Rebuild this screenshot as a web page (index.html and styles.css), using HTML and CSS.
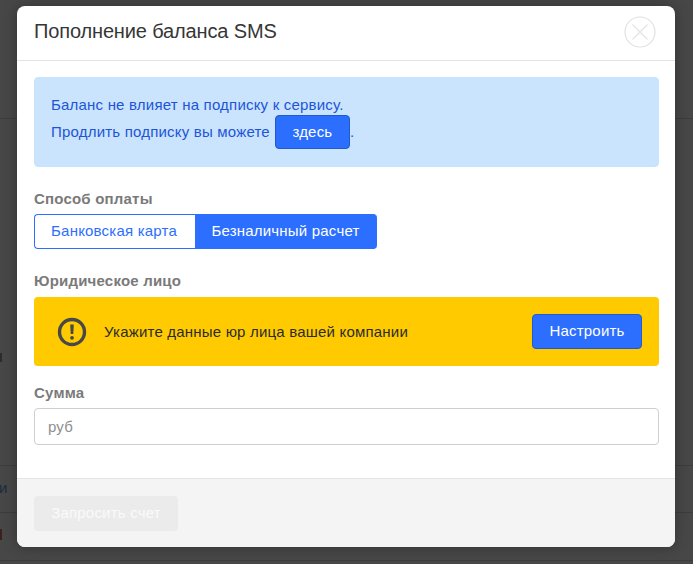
FILE: index.html
```html
<!DOCTYPE html>
<html lang="ru">
<head>
<meta charset="utf-8">
<title>Пополнение баланса SMS</title>
<link rel="stylesheet" href="styles.css">
</head>
<body>
<div class="backdrop">
  <div class="bg-row bg-row-a"></div>
  <div class="bg-row bg-row-b"><span class="bg-mark"></span></div>
  <div class="bg-row bg-row-c"><span class="bg-text">и</span></div>
  <div class="bg-row bg-row-d"><span class="bg-stub"></span></div>
</div>
<div class="modal">
  <header class="modal-head">
    <h1 class="modal-title">Пополнение баланса SMS</h1>
    <button class="close" aria-label="Закрыть">
      <svg width="32" height="32" viewBox="0 0 32 32" fill="none" stroke="#e2e2e2">
        <circle cx="16" cy="16" r="15" stroke-width="1.2"/>
        <path d="M8.5 8.5l15 15M23.500 8.500l-15 15" stroke-width="1.100"/>
      </svg>
    </button>
  </header>
  <section class="modal-body">
    <div class="notice">
      <p class="notice-line">Баланс не влияет на подписку к сервису.</p>
      <p class="notice-line">Продлить подписку вы можете<a class="btn btn-here">здесь</a>.</p>
    </div>
    <div class="field field-pay">
      <div class="label">Способ оплаты</div>
      <div class="toggle">
        <span class="toggle-item">Банковская карта</span>
        <span class="toggle-item toggle-on">Безналичный расчет</span>
      </div>
    </div>
    <div class="field field-legal">
      <div class="label">Юридическое лицо</div>
      <div class="warn">
        <svg class="warn-icon" width="30" height="30" viewBox="0 0 30 30">
          <circle cx="15" cy="15" r="12.500" fill="none" stroke="#484848" stroke-width="3.400"/>
          <path d="M13.200 7.500h3.600l-.5 9.500h-2.600z" fill="#484848"/>
          <circle cx="15" cy="20.800" r="1.900" fill="#484848"/>
        </svg>
        <span class="warn-text">Укажите данные юр лица вашей компании</span>
        <a class="btn btn-setup">Настроить</a>
      </div>
    </div>
    <div class="field field-sum">
      <div class="label">Сумма</div>
      <input class="input" type="text" placeholder="руб">
    </div>
  </section>
  <footer class="modal-foot">
    <button class="btn-request" disabled>Запросить счет</button>
  </footer>
</div>
</body>
</html>
```
FILE: styles.css
```css
* { box-sizing: border-box; }
html, body { margin: 0; height: 100%; }
body {
  width: 693px;
  height: 564px;
  overflow: hidden;
  background: #474747;
  font-family: "Liberation Sans", Arial, sans-serif;
  font-size: 15px;
  letter-spacing: .2px;
  position: relative;
}
.backdrop { display: flex; flex-direction: column; height: 100%; }
.bg-row { border-bottom: 1px solid #3c3c3c; position: relative; flex: none; }
.bg-row-a { height: 119px; }
.bg-row-b { height: 347px; }
.bg-row-c { height: 47px; }
.bg-row-d { height: 48px; }
.bg-text { position: absolute; left: -1px; top: 13px; line-height: 17px; color: #1c2c3c; font-size: 15px; letter-spacing: 0; }
.bg-mark { position: absolute; left: 0; top: 234px; width: 2px; height: 9px; background: #2b2b2b; }
.bg-stub { position: absolute; left: 0; top: 16px; width: 2px; height: 11px; background: #3a2020; }

.modal {
  position: absolute;
  left: 17px;
  top: 6px;
  width: 658px;
  height: 541px;
  background: #fff;
  border-radius: 8px;
  overflow: hidden;
  display: flex;
  flex-direction: column;
  box-shadow: 0 0 14px rgba(0, 0, 0, .3);
}
.modal-head {
  height: 55px;
  flex: none;
  border-bottom: 1px solid #e4e4e4;
  display: flex;
  align-items: center;
  justify-content: space-between;
  padding: 0 19px 3px 17px;
}
.modal-title { margin: 0; font-size: 20px; font-weight: 400; letter-spacing: -.14px; color: #363636; }
.close { width: 32px; height: 32px; padding: 0; background: none; border: 0; display: block; }
.close svg { display: block; }

.modal-body { flex: 1; padding: 16px 16px 0 17px; }
.notice {
  height: 90px;
  background: #cae4fd;
  border: 1px solid #c3e6fa;
  border-radius: 4px;
  padding: 16px 16px 0;
  color: #1d54d8;
}
.notice-line { margin: 0; height: 27px; line-height: 21px; display: flex; align-items: flex-start; white-space: pre; }
.btn {
  display: inline-flex;
  align-items: center;
  justify-content: center;
  background: #2c6fff;
  color: #fff;
  border: 1px solid #1f5bd0;
  border-radius: 4px;
}
.btn-here { width: 75px; height: 34px; margin: -6px 0 0 5px; padding-bottom: 2px; }

.field { display: block; }
.label { font-weight: 700; color: #7a7a7a; line-height: 17px; }
.field-pay { margin-top: 23px; }
.toggle { display: flex; margin-top: 7px; height: 35px; width: 343px; }
.toggle-item {
  flex: none;
  width: 161px;
  display: flex;
  align-items: center;
  justify-content: center;
  color: #2c6fff;
  border: 1px solid #2c6fff;
  border-right: 0;
  border-radius: 4px 0 0 4px;
  padding: 0 2px 2px 0;
}
.toggle-on { width: 182px; background: #2c6fff; color: #fff; border-radius: 0 4px 4px 0; }

.field-legal { margin-top: 23px; }
.warn {
  margin-top: 8px;
  height: 69px;
  background: #ffcb00;
  border-radius: 4px;
  display: flex;
  align-items: center;
  padding: 0 17px 0 23px;
}
.warn-icon { flex: none; margin-right: 17px; margin-top: 1px; }
.warn-text { flex: 1; color: #2b2b2b; }
.btn-setup { width: 110px; height: 35px; padding-bottom: 3px; }

.field-sum { margin-top: 18px; }
.input {
  display: block;
  width: 100%;
  height: 37px;
  margin-top: 7px;
  border: 1px solid #cfcfcf;
  border-radius: 4px;
  padding: 0 13px;
  font: inherit;
  letter-spacing: inherit;
  background: #fff;
  outline: none;
}
.input::placeholder { color: #8f8f8f; opacity: 1; }

.modal-foot {
  flex: none;
  height: 69px;
  background: #f4f4f4;
  border-top: 1px solid #e4e4e4;
  padding: 17px 17px 0;
}
.btn-request {
  display: block;
  width: 144px;
  height: 35px;
  border: 0;
  border-radius: 4px;
  background: #ebebeb;
  color: #fafafa;
  font: inherit;
  letter-spacing: inherit;
  padding: 0 0 2px;
}
```
